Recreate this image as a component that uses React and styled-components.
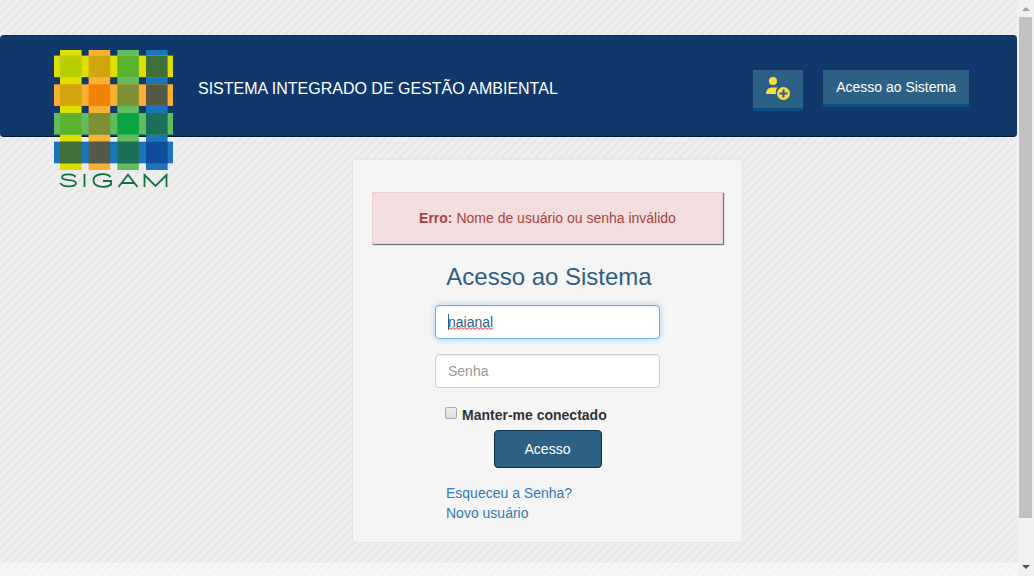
import React, { useEffect, useRef } from "react";
import styled, { createGlobalStyle } from "styled-components";

const GlobalStyle = createGlobalStyle`
  *, *::before, *::after { box-sizing: border-box; }
  html, body, #root { height: 100%; }
  body {
    margin: 0;
    overflow: hidden;
    font-family: "Liberation Sans", Arial, sans-serif;
    font-size: 14px;
    line-height: 20px;
    color: #333;
  }
  button, input { font: inherit; }
`;

const Window = styled.div`
  display: flex;
  height: 100vh;
`;

const Page = styled.div`
  flex: 1;
  min-width: 0;
  display: flex;
  flex-direction: column;
  padding-top: 35px;
  background: repeating-linear-gradient(135deg, #efeff0 0 2px, #e6e5e7 4px, #efeff0 6px);
`;

const Navbar = styled.header`
  display: flex;
  align-items: flex-start;
  flex: none;
  height: 102px;
  padding: 0 48px 0 54px;
  background: #11386b;
  border: 1px solid #0e2f5b;
  border-bottom-color: #03183a;
  border-width: 1px 0;
  border-radius: 4px;
`;

const Logo = styled.svg`
  flex: none;
  width: 120px;
  height: 140px;
  margin-top: 14px;
`;

const Brand = styled.h1`
  flex: 1;
  margin: 0 0 0 24px;
  font-size: 16px;
  font-weight: 400;
  line-height: 106px;
  color: #fff;
`;

const NavActions = styled.nav`
  display: flex;
  align-items: flex-start;
  gap: 20px;
  padding-top: 34px;
`;

const NavButton = styled.button`
  display: flex;
  align-items: center;
  justify-content: center;
  height: ${(p) => (p.$icon ? 41 : 37)}px;
  width: ${(p) => (p.$icon ? "50px" : "auto")};
  padding: 0 13px;
  border: 0;
  border-bottom: 3px solid #0a4f84;
  background: #2d6085;
  color: #fff;
`;

const UserIcon = styled.svg`
  flex: none;
  width: 26px;
  height: 26px;
`;

const Card = styled.main`
  width: 391px;
  max-width: 100%;
  margin: 21px 0 20px 352px;
  padding: 33px 19px 19px;
  background: #f5f5f5;
  border: 1px solid #e3e3e3;
  border-radius: 4px;
  box-shadow: inset 0 1px 1px rgba(0, 0, 0, 0.05);
`;

const Alert = styled.p`
  margin: 0;
  padding: 15px;
  border: 1px solid #ebccd1;
  background: #f2dede;
  color: #a94442;
  text-align: center;
  box-shadow: 1px 1px 1px #777;
`;

const Form = styled.form`
  display: flex;
  flex-direction: column;
  width: 225px;
  margin: 0 auto;
`;

const Title = styled.h2`
  margin: 17px 0 12px;
  padding-left: 3px;
  font-size: 24px;
  line-height: 32px;
  font-weight: 400;
  text-align: center;
  color: #2d5f87;
`;

const Field = styled.input`
  width: 100%;
  height: 34px;
  margin-bottom: 15px;
  padding: 6px 12px;
  border: 1px solid #ccc;
  border-radius: 4px;
  background: #fff;
  color: #2d5f87;
  outline: 0;
  box-shadow: inset 0 1px 1px rgba(0, 0, 0, 0.075);
  &::placeholder { color: #999; }
  &:focus {
    border-color: #66afe9;
    box-shadow: inset 0 1px 1px rgba(0, 0, 0, 0.075), 0 0 6px rgba(102, 175, 233, 0.5);
  }
`;

const FieldBox = styled.div`
  position: relative;
`;

const Squiggle = styled.svg`
  position: absolute;
  left: 13px;
  top: 22px;
  width: 46px;
  height: 3px;
  pointer-events: none;
`;

const Caret = styled.span`
  position: absolute;
  left: 13px;
  top: 9px;
  width: 1px;
  height: 16px;
  background: #2d5f87;
`;

const Remember = styled.label`
  display: flex;
  gap: 5px;
  margin: 2px 0 5px 10px;
  font-weight: 700;
`;

const Checkbox = styled.input`
  appearance: none;
  width: 12px;
  height: 12px;
  margin: 2px 0 0;
  border: 1px solid #a9a9a9;
  border-radius: 2px;
  background: linear-gradient(#eee, #dcdcdc);
  &:checked { background: #2d6085; }
`;

const Submit = styled.button`
  align-self: center;
  width: 108px;
  height: 38px;
  border: 1px solid #082f4c;
  border-radius: 4px;
  background: #2d6085;
  color: #fff;
`;

const Links = styled.div`
  display: flex;
  flex-direction: column;
  align-items: flex-start;
  padding: 15px 0 0 11px;
`;

const TextLink = styled.a`
  color: #337ab7;
  text-decoration: none;
`;

const Footer = styled.footer`
  flex: 1;
  min-height: 13px;
  background: rgba(255, 255, 255, 0.5);
`;

const ScrollTrack = styled.div`
  flex: none;
  display: flex;
  flex-direction: column;
  align-items: center;
  justify-content: space-between;
  width: 17px;
  padding: 6px 2px;
  background: #f1f1f1;
`;

const ScrollThumb = styled.div`
  flex: 1;
  align-self: stretch;
  margin: 6px 0 47px;
  background: #c1c1c1;
`;

const Arrow = styled.svg`
  flex: none;
  width: 8px;
  height: 5px;
`;

const bands = ["#dedf00", "#fbb034", "#62bb5e", "#1b75bb"];
const crossings = [
  ["#b8ce00", "#d1a50b", "#5ab22e", "#3f7038"],
  ["#d1a50b", "#f28207", "#7e8f35", "#555a47"],
  ["#5ab22e", "#7e8f35", "#0ba344", "#1c7057"],
  ["#3f7038", "#555a47", "#1c7057", "#104c9b"],
];
const columns = [6, 34.6, 63.3, 92];
const rows = [5.6, 34.3, 63, 91.7];
const band = 21.6;

function SigamLogo() {
  return (
    <Logo viewBox="0 0 120 140" role="img" aria-label="SIGAM">
      {bands.map((fill, i) => (
        <rect key={`c${i}`} x={columns[i]} y="0" width={band} height="120" fill={fill} />
      ))}
      {bands.map((fill, i) => (
        <rect key={`r${i}`} x="0" y={rows[i]} width="119" height={band} fill={fill} />
      ))}
      {crossings.map((row, r) =>
        row.map((fill, c) => (
          <rect key={`${r}${c}`} x={columns[c]} y={rows[r]} width={band} height={band} fill={fill} />
        ))
      )}
      <g fill="none" stroke="#14713c" strokeWidth="1.8">
        <path d="M21.500 127C19.500 123.500 8 123.500 8 127.500C8 131.500 22 128.500 22 133C22 137.500 8 137.500 6.500 133" />
        <path d="M30.500 124V137" />
        <path d="M56.500 127C53 122.500 39.500 123 39.500 130.500C39.500 138 53 138 57 134.500V131H49" />
        <path d="M64.500 137L74 124.800L83.500 137M68 133H80.500" />
        <path d="M90.500 137V125L101.500 136L112.500 125V137" />
      </g>
    </Logo>
  );
}

const squigglePath =
  "M0 2.500" + Array.from({ length: 23 }, (_, i) => `L${i * 2 + 1} ${i % 2 ? 2.5 : 0.5}`).join("");

export default function App() {
  const userRef = useRef(null);
  useEffect(() => {
    userRef.current.focus();
    userRef.current.setSelectionRange(0, 0);
  }, []);

  return (
    <>
      <GlobalStyle />
      <Window>
        <Page>
          <Navbar>
            <SigamLogo />
            <Brand>SISTEMA INTEGRADO DE GESTÃO AMBIENTAL</Brand>
            <NavActions>
              <NavButton $icon type="button" aria-label="Novo usuário">
                <UserIcon viewBox="0 0 26 26" aria-hidden="true">
                  <circle cx="8" cy="5" r="4" fill="#fedb41" />
                  <path d="M1 18C1 13.500 4 11.500 7.500 11.500H12.500C11 13.500 10.500 15.500 11 18Z" fill="#fedb41" />
                  <circle cx="18.500" cy="17.500" r="6.500" fill="#fedb41" />
                  <path d="M18.500 13.500V21.500M14.500 17.500H22.500" stroke="#2d6085" strokeWidth="2" />
                </UserIcon>
              </NavButton>
              <NavButton type="button">Acesso ao Sistema</NavButton>
            </NavActions>
          </Navbar>
          <Card>
            <Alert role="alert">
              <strong>Erro:</strong> Nome de usuário ou senha inválido
            </Alert>
            <Form onSubmit={(e) => e.preventDefault()}>
              <Title>Acesso ao Sistema</Title>
              <FieldBox>
                <Field ref={userRef} type="text" aria-label="Usuário" defaultValue="naianal" spellCheck={false} />
                <Squiggle viewBox="0 0 46 3" aria-hidden="true">
                  <path d={squigglePath} fill="none" stroke="#f01818" />
                </Squiggle>
                <Caret />
              </FieldBox>
              <Field type="password" aria-label="Senha" placeholder="Senha" />
              <Remember>
                <Checkbox type="checkbox" />
                Manter-me conectado
              </Remember>
              <Submit type="submit">Acesso</Submit>
              <Links>
                <TextLink href="#senha">Esqueceu a Senha?</TextLink>
                <TextLink href="#novo">Novo usuário</TextLink>
              </Links>
            </Form>
          </Card>
          <Footer />
        </Page>
        <ScrollTrack aria-hidden="true">
          <Arrow viewBox="0 0 8 5"><path d="M0 5L4 1L8 5Z" fill="#a3a3a3" /></Arrow>
          <ScrollThumb />
          <Arrow viewBox="0 0 8 5"><path d="M0 0L4 4L8 0Z" fill="#505050" /></Arrow>
        </ScrollTrack>
      </Window>
    </>
  );
}
